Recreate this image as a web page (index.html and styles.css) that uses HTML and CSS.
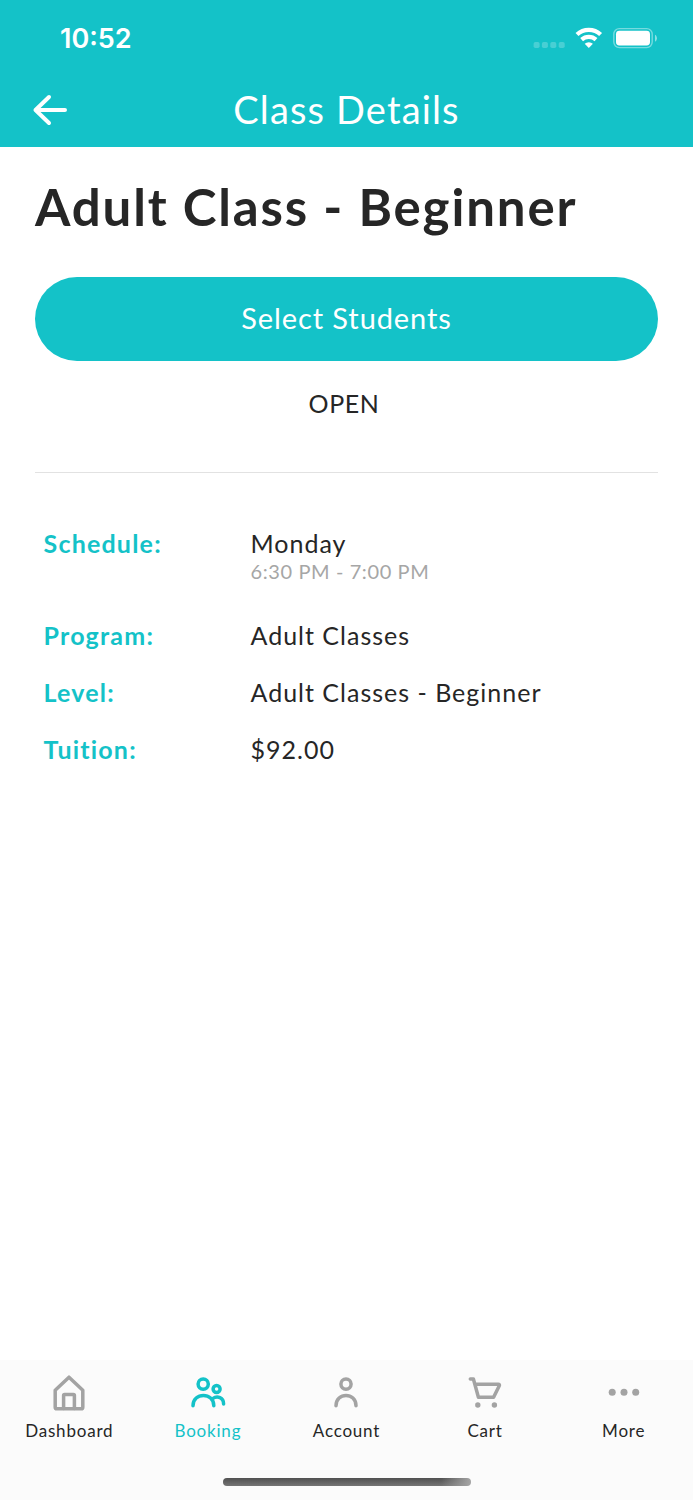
FILE: index.html
```
<!DOCTYPE html>
<html lang="en">
<head>
    <meta charset="UTF-8">
    <title>Class Details</title>
    <link rel="stylesheet" href="styles.css">
</head>
<body>
    <header>
        <div class="status-bar">
            <span class="clock">10:52</span>
            <svg class="status-icons" width="124" height="24" viewBox="0 0 124 24">
                <g fill="#fff" opacity="0.22">
                    <rect x="0.6" y="16" width="6" height="6" rx="1.8"/>
                    <rect x="8.9" y="16" width="6" height="6" rx="1.8"/>
                    <rect x="17.3" y="16" width="6" height="6" rx="1.8"/>
                    <rect x="25.7" y="16" width="6" height="6" rx="1.8"/>
                </g>
                <g fill="none" stroke="#fff" stroke-width="4.2">
                    <path d="M44 8.6 A17 17 0 0 1 67.6 8.6"/>
                    <path d="M48.6 13.6 A10.6 10.6 0 0 1 63 13.6"/>
                </g>
                <path d="M55.8 22 L51.7 17.8 A6 6 0 0 1 59.9 17.8 Z" fill="#fff"/>
                <rect x="80.8" y="2.6" width="38.4" height="19" rx="5.5" fill="none" stroke="#fff" stroke-width="1.4" opacity="0.42"/>
                <rect x="83" y="4.8" width="34" height="14.6" rx="3.4" fill="#fff"/>
                <path d="M122 8.7 C124.6 9.8 124.6 14.5 122 15.6 Z" fill="#fff" opacity="0.5"/>
            </svg>
        </div>
        <div class="nav-bar">
            <svg class="back" width="36" height="32" viewBox="0 0 36 32">
                <path d="M17 3 L3.5 16 L17 29 M3.5 16 H33" fill="none" stroke="#fff" stroke-width="4" stroke-linecap="round" stroke-linejoin="round"/>
            </svg>
            <span class="nav-title">Class Details</span>
        </div>
    </header>

    <main>
        <h1>Adult Class - Beginner</h1>
        <button type="button" class="select-btn">Select Students</button>
        <p class="class-status">OPEN</p>
        <dl class="details">
            <dt>Schedule:</dt>
            <dd class="day">Monday<small>6:30 PM - 7:00 PM</small></dd>
            <dt>Program:</dt>
            <dd>Adult Classes</dd>
            <dt>Level:</dt>
            <dd>Adult Classes - Beginner</dd>
            <dt>Tuition:</dt>
            <dd>$92.00</dd>
        </dl>
    </main>

    <footer>
        <nav class="tabs">
            <a class="tab">
                <svg width="40" height="40" viewBox="0 0 40 40">
                    <path d="M6.2 17.2 L20 4.2 L33.8 17.2 V34.2 Q33.8 35.8 32.2 35.8 H7.8 Q6.2 35.8 6.2 34.2 Z"/>
                    <path d="M14.6 35.5 V22.6 Q14.6 21.6 15.6 21.6 H24.4 Q25.4 21.6 25.4 22.6 V35.5"/>
                </svg>
                <span>Dashboard</span>
            </a>
            <a class="tab active">
                <svg width="40" height="40" viewBox="0 0 40 40">
                    <circle cx="15.2" cy="11.1" r="5.1"/>
                    <path d="M5 32.8 C5 19 25.8 19 25.8 32.8"/>
                    <circle cx="28.6" cy="16" r="3.5"/>
                    <path d="M24.6 25.6 C29.5 22.3 35.6 24.6 35.6 31"/>
                </svg>
                <span>Booking</span>
            </a>
            <a class="tab">
                <svg width="40" height="40" viewBox="0 0 40 40">
                    <circle cx="20" cy="11.1" r="5.1"/>
                    <path d="M10 32.8 C10 19 30 19 30 32.8"/>
                </svg>
                <span>Account</span>
            </a>
            <a class="tab">
                <svg width="40" height="40" viewBox="0 0 40 40">
                    <path d="M5.3 6 H8.4 L13.4 24.2 H28.6 L34.4 12.5 Q34.6 11.2 33.4 11.2 H10"/>
                    <circle class="dot" cx="12.8" cy="32" r="2.7"/>
                    <circle class="dot" cx="29.4" cy="32" r="2.7"/>
                </svg>
                <span>Cart</span>
            </a>
            <a class="tab">
                <svg width="40" height="40" viewBox="0 0 40 40">
                    <circle class="dot" cx="8.2" cy="19.2" r="3.5"/>
                    <circle class="dot" cx="20" cy="19.2" r="3.5"/>
                    <circle class="dot" cx="31.7" cy="19.2" r="3.5"/>
                </svg>
                <span>More</span>
            </a>
        </nav>
        <div class="home-indicator"></div>
    </footer>
</body>
</html>
```
FILE: styles.css
```
* {
    box-sizing: border-box;
}
body {
    font-family: Lato, sans-serif;
    color: #262626;
    background-color: #fff;
    margin: 0;
    height: 1500px;
    display: flex;
    flex-direction: column;
}
header {
    height: 147px;
    background-color: #14c2c8;
    color: #fff;
}
.status-bar {
    height: 73px;
    padding: 2px 36px 0 60px;
    display: flex;
    justify-content: space-between;
    align-items: center;
}
.clock {
    padding-top: 2px;
    font-family: Inter, sans-serif;
    font-size: 27px;
    font-weight: 600;
}
.nav-bar {
    height: 73px;
    padding: 0 32px;
    display: grid;
    grid-template-columns: 36px 1fr 36px;
    align-items: center;
}
.nav-title {
    padding-bottom: 1px;
    font-size: 38px;
    letter-spacing: 1.15px;
    text-align: center;
}
main {
    flex: 1;
    padding: 29px 35px 0;
}
h1 {
    margin: 0;
    font-size: 51px;
    line-height: 62px;
    font-weight: bold;
    letter-spacing: 1.85px;
    white-space: nowrap;
}
.select-btn {
    display: block;
    width: 100%;
    height: 84px;
    margin-top: 38.5px;
    padding: 0 0 2px;
    border: none;
    border-radius: 42px;
    background-color: #14c2c8;
    color: #fff;
    font-family: inherit;
    font-size: 29px;
    letter-spacing: 0.9px;
}
.class-status {
    margin: 0;
    padding: 27.5px 5px 54px 0;
    font-size: 25px;
    line-height: 30px;
    text-align: center;
    letter-spacing: 0.6px;
    border-bottom: 1px solid #e2e2e2;
}
.details {
    margin: 55px 0 0;
    padding-left: 8.5px;
    display: grid;
    grid-template-columns: 207px 1fr;
    row-gap: 27px;
    font-size: 25px;
    line-height: 30px;
    letter-spacing: 1px;
}
dt {
    color: #14c2c8;
    font-weight: bold;
    letter-spacing: 1.2px;
}
dd {
    margin: 0;
}
.day {
    padding-bottom: 8px;
}
.day small {
    display: block;
    color: #a6a6a6;
    font-size: 20px;
    line-height: 27px;
    letter-spacing: 0.6px;
}
footer {
    height: 140px;
    background-color: #fbfbfb;
}
.tabs {
    display: grid;
    grid-template-columns: repeat(5, 1fr);
    padding-top: 13px;
}
.tab {
    display: flex;
    flex-direction: column;
    align-items: center;
    font-size: 17px;
    line-height: 20px;
    letter-spacing: 0.8px;
}
.tab svg {
    margin-bottom: 8px;
    fill: none;
    stroke: #a3a3a3;
    stroke-width: 3.5;
    stroke-linecap: round;
    stroke-linejoin: round;
}
.tab .dot {
    fill: #a3a3a3;
    stroke: none;
}
.active {
    color: #14c2c8;
}
.active svg {
    stroke: #14c2c8;
}
.home-indicator {
    width: 248px;
    height: 8px;
    margin: 37px auto 0;
    border-radius: 4px;
    background: linear-gradient(to right, transparent 88%, #a5a5a5), linear-gradient(#505050, #747474);
}
```
